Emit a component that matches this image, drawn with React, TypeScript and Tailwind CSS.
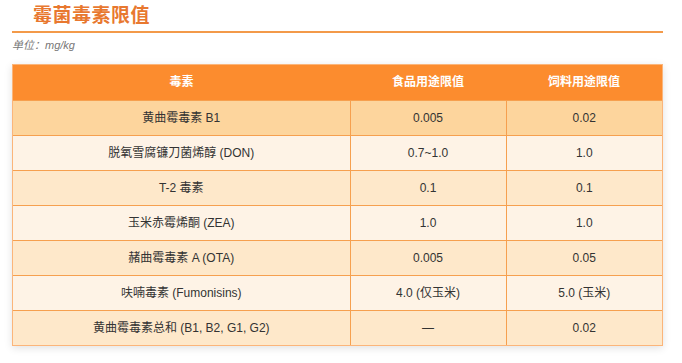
const rows = [
  { name: "黄曲霉毒素 B1", food: "0.005", feed: "0.02" },
  { name: "脱氧雪腐镰刀菌烯醇 (DON)", food: "0.7~1.0", feed: "1.0" },
  { name: "T-2 毒素", food: "0.1", feed: "0.1" },
  { name: "玉米赤霉烯酮 (ZEA)", food: "1.0", feed: "1.0" },
  { name: "赭曲霉毒素 A (OTA)", food: "0.005", feed: "0.05" },
  { name: "呋喃毒素 (Fumonisins)", food: "4.0 (仅玉米)", feed: "5.0 (玉米)" },
  { name: "黄曲霉毒素总和 (B1, B2, G1, G2)", food: "—", feed: "0.02" },
];

function rowBg(i: number) {
  if (i === 0) return "bg-[#fdd59d]";
  return i % 2 === 0 ? "bg-[#fee8ca]" : "bg-[#fef3e6]";
}

function App() {
  return (
    <div
      className="bg-white w-[682px] h-[363px] overflow-hidden px-3 pt-1"
      style={{ fontFamily: '"Liberation Sans", "Noto Sans CJK SC", sans-serif' }}
    >
      <div className="border-b-2 border-[#f39a4a] h-[29px] pl-[21px] w-[651px]">
        <h1 className="text-[19px] leading-[24px] font-bold text-[#e8782f] tracking-[0.5px]">
          霉菌毒素限值
        </h1>
      </div>

      <p className="text-[11px] italic text-[#777] mt-[5px] leading-[14px]">
        单位：mg/kg
      </p>

      <div className="mt-[12px] w-[651px] border border-[#fbb57a] shadow-[0_2px_8px_rgba(0,0,0,0.12)]">
        <table className="w-full border-collapse text-[12px] text-[#333] table-fixed">
          <thead>
            <tr className="bg-[#fc8c2e] text-white h-[35px]">
              <th className="w-[337px] font-bold">毒素</th>
              <th className="w-[156px] font-bold">食品用途限值</th>
              <th className="font-bold">饲料用途限值</th>
            </tr>
          </thead>
          <tbody>
            {rows.map((r, i) => (
              <tr key={r.name} className={`${rowBg(i)} h-[35px]`}>
                <td className="text-center border-t border-r border-[#f6a04f]">{r.name}</td>
                <td className="text-center border-t border-r border-[#f6a04f]">{r.food}</td>
                <td className="text-center border-t border-[#f6a04f]">{r.feed}</td>
              </tr>
            ))}
          </tbody>
        </table>
      </div>
    </div>
  );
}

export default App;
